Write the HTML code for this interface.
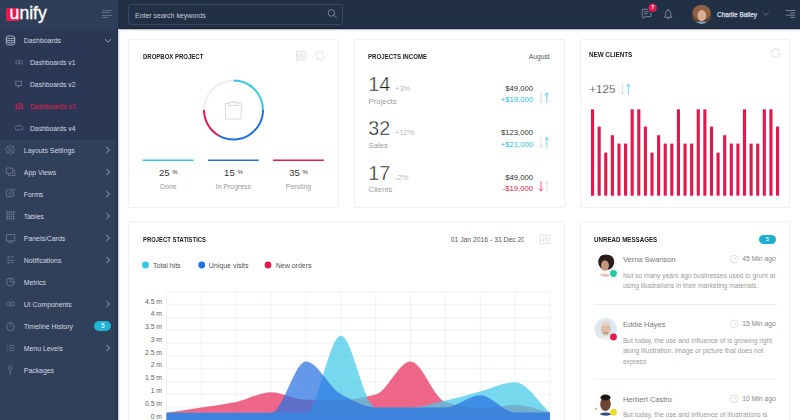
<!DOCTYPE html>
<html><head><meta charset="utf-8"><style>
html,body{margin:0;padding:0;}
body{width:800px;height:420px;overflow:hidden;position:relative;background:#fff;font-family:"Liberation Sans", sans-serif;}
.t{position:absolute;white-space:nowrap;font-family:"Liberation Sans", sans-serif;}
.r{position:absolute;}
svg.r{overflow:visible;}
</style></head><body>
<div class="r" style="left:0px;top:0px;width:118px;height:420px;background:#303f5a;"></div>
<div class="r" style="left:0px;top:0px;width:118px;height:29px;background:#2f3e58;"></div>
<div class="r" style="left:0px;top:29px;width:118px;height:110.5px;background:#2a3855;"></div>
<div class="r" style="left:114.5px;top:29px;width:2.6px;height:391px;background:rgba(25,45,95,0.14);"></div>
<div class="r" style="left:117.1px;top:29px;width:0.9px;height:391px;background:#222d48;"></div>
<div class="r" style="left:6px;top:8px;width:14px;height:12.8px;background:#e8194b;border-radius:2px 3px 3px 1px;"></div>
<div class="t" style="top:5.00px;font-size:17.6px;line-height:17.6px;color:#ffffff;font-weight:400;left:9.6px;-webkit-text-stroke:0.35px #fff;">unify</div>
<div class="r" style="left:101.5px;top:9.5px;width:10px;height:1px;background:#5f6c85;"></div>
<div class="r" style="left:101.5px;top:12px;width:8px;height:1px;background:#5f6c85;"></div>
<div class="r" style="left:101.5px;top:14.5px;width:10px;height:1px;background:#5f6c85;"></div>
<div class="r" style="left:101.5px;top:17px;width:6px;height:1px;background:#5f6c85;"></div>
<div class="t" style="top:37.96px;font-size:6.9px;line-height:6.9px;color:#d3d8e0;font-weight:400;left:23.8px;">Dashboards</div>
<div class="t" style="top:59.99px;font-size:6.75px;line-height:6.75px;color:#d3d8e0;font-weight:400;left:30px;">Dashboards v1</div>
<div class="t" style="top:81.99px;font-size:6.75px;line-height:6.75px;color:#d3d8e0;font-weight:400;left:30px;">Dashboards v2</div>
<div class="t" style="top:103.99px;font-size:6.75px;line-height:6.75px;color:#e8194b;font-weight:400;left:30px;">Dashboards v3</div>
<div class="t" style="top:125.99px;font-size:6.75px;line-height:6.75px;color:#d3d8e0;font-weight:400;left:30px;">Dashboards v4</div>
<div class="t" style="top:148.06px;font-size:6.9px;line-height:6.9px;color:#d3d8e0;font-weight:400;left:23.8px;">Layouts Settings</div>
<div class="t" style="top:170.06px;font-size:6.9px;line-height:6.9px;color:#d3d8e0;font-weight:400;left:23.8px;">App Views</div>
<div class="t" style="top:192.06px;font-size:6.9px;line-height:6.9px;color:#d3d8e0;font-weight:400;left:23.8px;">Forms</div>
<div class="t" style="top:214.06px;font-size:6.9px;line-height:6.9px;color:#d3d8e0;font-weight:400;left:23.8px;">Tables</div>
<div class="t" style="top:236.06px;font-size:6.9px;line-height:6.9px;color:#d3d8e0;font-weight:400;left:23.8px;">Panels/Cards</div>
<div class="t" style="top:258.06px;font-size:6.9px;line-height:6.9px;color:#d3d8e0;font-weight:400;left:23.8px;">Notifications</div>
<div class="t" style="top:280.06px;font-size:6.9px;line-height:6.9px;color:#d3d8e0;font-weight:400;left:23.8px;">Metrics</div>
<div class="t" style="top:302.06px;font-size:6.9px;line-height:6.9px;color:#d3d8e0;font-weight:400;left:23.8px;">UI Components</div>
<div class="t" style="top:324.06px;font-size:6.9px;line-height:6.9px;color:#d3d8e0;font-weight:400;left:23.8px;">Timeline History</div>
<div class="t" style="top:346.06px;font-size:6.9px;line-height:6.9px;color:#d3d8e0;font-weight:400;left:23.8px;">Menu Levels</div>
<div class="t" style="top:368.06px;font-size:6.9px;line-height:6.9px;color:#d3d8e0;font-weight:400;left:23.8px;">Packages</div>
<svg class="r" style="left:0;top:0" width="118" height="420"><g fill="none" stroke="#b9c0cc" stroke-width="0.9"><ellipse cx="10.5" cy="37.3" rx="4.2" ry="1.4"/><path d="M6.3,37.3 V43.6 M14.7,37.3 V43.6"/><path d="M6.3,39.4 A4.2,1.4 0 0 0 14.7,39.4 M6.3,41.5 A4.2,1.4 0 0 0 14.7,41.5 M6.3,43.6 A4.2,1.4 0 0 0 14.7,43.6"/></g><path d="M105,39.3 L108,42.2 L111,39.3" fill="none" stroke="#aab2c2" stroke-width="0.9"/><g fill="none" stroke="#68758e" stroke-width="0.9"><circle cx="17.3" cy="62.3" r="1.7"/><circle cx="20.8" cy="62.3" r="1.7"/></g><g fill="none" stroke="#68758e" stroke-width="0.9"><rect x="15.8" y="81.2" width="5.8" height="4.2"/><path d="M18.7,85.4 V86.8 M17.3,86.8 H20.1"/></g><g fill="none" stroke="#e8194b" stroke-width="0.9"><path d="M16,108.5 V105 L17,103.8 H21.5 L22.5,105 V108.5 Z M16,106 H22.5"/></g><g fill="none" stroke="#68758e" stroke-width="0.9"><path d="M15.6,129.9 V127.4 L16.8,125.8 H21.4 L22.6,127.4 V129.9 Z"/></g><g fill="none" stroke="#68758e" stroke-width="0.9"><circle cx="10.3" cy="150" r="1.6"/><path d="M10.3,145.4 L11.6,146.6 L13.4,146.5 L13.6,148.3 L14.9,149.7 L13.6,151.2 L13.4,153 L11.6,152.9 L10.3,154.2 L9,152.9 L7.2,153 L7,151.2 L5.7,149.7 L7,148.3 L7.2,146.5 L9,146.6 Z"/></g><g fill="none" stroke="#68758e" stroke-width="0.9"><rect x="6.2" y="168" width="6.5" height="5.3"/><path d="M8.5,173.3 V175.5 H14.9 V170.3 H12.7"/></g><g fill="none" stroke="#68758e" stroke-width="0.9"><path d="M12,189.8 H6.3 V196.6 H13.6 V191.5"/><path d="M9.3,194.3 L9.6,192.6 L13.5,188.7 L14.7,189.9 L10.8,193.8 Z"/></g><rect x="6.30" y="211.30" width="1.6" height="1.6" fill="#68758e"/><rect x="6.30" y="213.55" width="1.6" height="1.6" fill="#68758e"/><rect x="6.30" y="215.80" width="1.6" height="1.6" fill="#68758e"/><rect x="6.30" y="218.05" width="1.6" height="1.6" fill="#68758e"/><rect x="8.55" y="211.30" width="1.6" height="1.6" fill="#68758e"/><rect x="8.55" y="213.55" width="1.6" height="1.6" fill="#68758e"/><rect x="8.55" y="215.80" width="1.6" height="1.6" fill="#68758e"/><rect x="8.55" y="218.05" width="1.6" height="1.6" fill="#68758e"/><rect x="10.80" y="211.30" width="1.6" height="1.6" fill="#68758e"/><rect x="10.80" y="213.55" width="1.6" height="1.6" fill="#68758e"/><rect x="10.80" y="215.80" width="1.6" height="1.6" fill="#68758e"/><rect x="10.80" y="218.05" width="1.6" height="1.6" fill="#68758e"/><rect x="13.05" y="211.30" width="1.6" height="1.6" fill="#68758e"/><rect x="13.05" y="213.55" width="1.6" height="1.6" fill="#68758e"/><rect x="13.05" y="215.80" width="1.6" height="1.6" fill="#68758e"/><rect x="13.05" y="218.05" width="1.6" height="1.6" fill="#68758e"/><g fill="none" stroke="#68758e" stroke-width="0.9"><rect x="6.3" y="234.6" width="8.5" height="6.2"/><path d="M7.5,242.2 H13.6"/></g><g fill="none" stroke="#68758e" stroke-width="0.9"><path d="M7.5,256.8 H9.5 M7.5,258 H9.5 M10.5,256.8 H14 M7.5,260.3 H14 M7.5,262.4 H9.5 M10.5,262.4 H14 M7.5,263.4 H9.5"/></g><g fill="none" stroke="#68758e" stroke-width="0.9"><circle cx="10.5" cy="282" r="4"/><path d="M10.5,278 V282 H14.5"/></g><g fill="none" stroke="#68758e" stroke-width="0.9"><circle cx="8.6" cy="303.9" r="2"/><circle cx="12.6" cy="303.9" r="2"/></g><g fill="none" stroke="#68758e" stroke-width="0.9"><circle cx="10.5" cy="327" r="3.8"/><path d="M10.5,327 V324.8 M9.3,322.2 H11.7"/></g><g fill="none" stroke="#68758e" stroke-width="0.9"><path d="M6.8,345.5 H7.8 M9,345.5 H14.6 M6.8,347.9 H7.8 M9,347.9 H14.6 M6.8,350.3 H7.8 M9,350.3 H14.6"/></g><g fill="none" stroke="#68758e" stroke-width="0.9"><rect x="8.5" y="366" width="3.8" height="4" rx="1.9"/><path d="M10.4,370 V374.5 M9.4,373 H11.4"/></g><path d="M106.3,147.0 L109.6,150.0 L106.3,153.0" fill="none" stroke="#aab2c2" stroke-width="0.9"/><path d="M106.3,169.0 L109.6,172.0 L106.3,175.0" fill="none" stroke="#aab2c2" stroke-width="0.9"/><path d="M106.3,191.0 L109.6,194.0 L106.3,197.0" fill="none" stroke="#aab2c2" stroke-width="0.9"/><path d="M106.3,213.0 L109.6,216.0 L106.3,219.0" fill="none" stroke="#aab2c2" stroke-width="0.9"/><path d="M106.3,235.0 L109.6,238.0 L106.3,241.0" fill="none" stroke="#aab2c2" stroke-width="0.9"/><path d="M106.3,257.0 L109.6,260.0 L106.3,263.0" fill="none" stroke="#aab2c2" stroke-width="0.9"/><path d="M106.3,301.0 L109.6,304.0 L106.3,307.0" fill="none" stroke="#aab2c2" stroke-width="0.9"/><path d="M106.3,345.0 L109.6,348.0 L106.3,351.0" fill="none" stroke="#aab2c2" stroke-width="0.9"/></svg>
<div class="r" style="left:94.3px;top:320.5px;width:17px;height:10.3px;background:#1fb3d4;border-radius:5.2px;"></div>
<div class="t" style="top:322.50px;font-size:6.5px;line-height:6.5px;color:#ffffff;font-weight:400;left:-47.20px;width:300px;text-align:center;">5</div>
<div class="r" style="left:118px;top:0px;width:682px;height:28px;background:#223045;"></div>
<div class="r" style="left:118px;top:28px;width:682px;height:1px;background:#151d33;"></div>
<div class="r" style="left:127.5px;top:3.5px;width:215.5px;height:21px;background:transparent;box-sizing:border-box;border:1px solid #3a4864;border-radius:3px;"></div>
<div class="t" style="top:11.93px;font-size:7.05px;line-height:7.05px;color:#c5cbd5;font-weight:400;letter-spacing:-0.04px;left:135px;">Enter search keywords</div>
<svg class="r" style="left:0;top:0" width="800" height="28"><g fill="none" stroke="#7e8aa2" stroke-width="0.9"><circle cx="331.4" cy="12.9" r="3.3"/><path d="M333.8,15.3 L336.8,18.2"/></g><g fill="none" stroke="#7e8aa2" stroke-width="0.9"><path d="M642.2,9.3 H651 V16.6 H645.2 L643,18.6 V16.6 H642.2 Z"/><path d="M644.2,11.8 H649 M644.2,13.8 H647.5"/></g><circle cx="652.7" cy="7.7" r="4.9" fill="#223045"/><circle cx="652.7" cy="7.7" r="4.2" fill="#e8194b"/><g fill="none" stroke="#7e8aa2" stroke-width="0.9"><path d="M664.5,17.3 H672 L670.8,15.8 V13 A2.6,3 0 0 0 665.7,13 V15.8 Z"/><path d="M667.4,9.6 H669.1 M667.1,18.4 H669.4"/></g><path d="M763.2,12.6 L766,15.2 L768.8,12.6" fill="none" stroke="#6b7790" stroke-width="0.9"/><rect x="785.7" y="10.0" width="9.5" height="1" fill="#7884a0"/><rect x="790.2" y="12.4" width="5" height="1" fill="#7884a0"/><rect x="785.7" y="14.7" width="9.5" height="1" fill="#7884a0"/><rect x="790.2" y="16.9" width="5" height="1" fill="#7884a0"/><defs><clipPath id="av0"><circle cx="701.6" cy="14.4" r="9.7"/></clipPath></defs><defs><filter id="blh" x="-10%" y="-10%" width="120%" height="120%"><feGaussianBlur stdDeviation="0.7"/></filter></defs><g clip-path="url(#av0)" filter="url(#blh)"><rect x="690" y="3" width="23" height="23" fill="#5a4536"/><ellipse cx="701.6" cy="12" rx="9" ry="8.5" fill="#8f6244"/><ellipse cx="701.8" cy="15.5" rx="4.3" ry="5.5" fill="#d9ad8f"/><ellipse cx="701.6" cy="25" rx="7" ry="3.5" fill="#7aa6c8"/></g></svg>
<div class="t" style="top:5.24px;font-size:5.5px;line-height:5.5px;color:#ffffff;font-weight:700;left:502.70px;width:300px;text-align:center;">7</div>
<div class="t" style="top:12.10px;font-size:6.5px;line-height:6.5px;color:#d9dde4;font-weight:400;left:717px;-webkit-text-stroke:0.25px #d9dde4;">Charlie Bailey</div>
<div class="r" style="left:118px;top:29px;width:682px;height:391px;background:#ffffff;"></div>
<div class="r" style="left:118px;top:29px;width:682px;height:1.6px;background:linear-gradient(#b9bdc6,#ffffff);"></div>
<div class="r" style="left:118px;top:29px;width:1.5px;height:391px;background:linear-gradient(90deg,#c3c8d3,#ffffff);"></div>
<div class="r" style="left:128px;top:39px;width:210.5px;height:168.5px;background:#ffffff;box-sizing:border-box;border:1px solid #f0f0f0;border-radius:1.5px;"></div>
<div class="r" style="left:353.5px;top:39px;width:211px;height:168.5px;background:#ffffff;box-sizing:border-box;border:1px solid #f0f0f0;border-radius:1.5px;"></div>
<div class="r" style="left:579.5px;top:39px;width:210.5px;height:168.5px;background:#ffffff;box-sizing:border-box;border:1px solid #f0f0f0;border-radius:1.5px;"></div>
<div class="r" style="left:128px;top:221px;width:436.5px;height:260px;background:#ffffff;box-sizing:border-box;border:1px solid #f0f0f0;border-radius:1.5px;"></div>
<div class="r" style="left:579.5px;top:221px;width:210.5px;height:260px;background:#ffffff;box-sizing:border-box;border:1px solid #f0f0f0;border-radius:1.5px;"></div>
<div class="t" style="top:53.94px;font-size:6.8px;line-height:6.8px;color:#222222;font-weight:700;left:143px;transform:scaleX(0.883);transform-origin:0 0;">DROPBOX PROJECT</div>
<div class="t" style="top:53.94px;font-size:6.8px;line-height:6.8px;color:#222222;font-weight:700;left:368.3px;transform:scaleX(0.900);transform-origin:0 0;">PROJECTS INCOME</div>
<div class="t" style="top:51.94px;font-size:6.8px;line-height:6.8px;color:#222222;font-weight:700;left:589.1px;transform:scaleX(0.922);transform-origin:0 0;">NEW CLIENTS</div>
<div class="t" style="top:236.74px;font-size:6.8px;line-height:6.8px;color:#222222;font-weight:700;left:143px;transform:scaleX(0.867);transform-origin:0 0;">PROJECT STATISTICS</div>
<div class="t" style="top:236.94px;font-size:6.8px;line-height:6.8px;color:#222222;font-weight:700;left:593.7px;transform:scaleX(0.910);transform-origin:0 0;">UNREAD MESSAGES</div>
<svg class="r" style="left:0;top:0" width="800" height="420"><g fill="none" stroke="#dadada" stroke-width="0.8"><rect x="296.4" y="51.6" width="8.8" height="8.4"/><path d="M298.7,53.3 V58.5 M300.8,53.3 V58.5 M302.9,53.3 V58.5 M297.9,56.5 H299.5 M300,54.6 H301.6 M302.1,57.2 H303.7"/></g><g fill="none" stroke="#d6d6d6" stroke-width="0.8"><path d="M315.60,55.70 A4.2,4.2 0 0 1 322.74,52.76"/><path d="M324.00,55.70 A4.2,4.2 0 0 1 316.86,58.64"/><path d="M321.14,51.56 L322.74,52.76 L322.44,54.56"/><path d="M318.46,59.84 L316.86,58.64 L317.16,56.84"/></g><g fill="none" stroke="#d6d6d6" stroke-width="0.8"><path d="M771.40,53.00 A4.2,4.2 0 0 1 778.54,50.06"/><path d="M779.80,53.00 A4.2,4.2 0 0 1 772.66,55.94"/><path d="M776.94,48.86 L778.54,50.06 L778.24,51.86"/><path d="M774.26,57.14 L772.66,55.94 L772.96,54.14"/></g><path d="M204.00,110.00 A29.5,29.5 0 0 1 233.50,80.50" fill="none" stroke="#eeeeee" stroke-width="2"/><path d="M233.50,80.50 A29.5,29.5 0 0 1 263.00,110.00" fill="none" stroke="#35c6e6" stroke-width="2"/><path d="M263.00,110.00 A29.5,29.5 0 0 1 218.75,135.55" fill="none" stroke="#1f6fe0" stroke-width="2"/><path d="M218.75,135.55 A29.5,29.5 0 0 1 204.00,110.00" fill="none" stroke="#e6194b" stroke-width="2"/><g fill="none" stroke="#d5d5d5" stroke-width="0.9"><path d="M228.7,103.3 H225.6 V119.1 H241.2 V103.3 H238.2"/><rect x="229" y="102.3" width="9" height="3.3"/><path d="M231.8,102.3 L233.5,100.9 L235.2,102.3"/></g><rect x="142.75" y="159.5" width="51" height="1.5" fill="#35c6e6"/><rect x="208" y="159.5" width="50.75" height="1.5" fill="#1f6fe0"/><rect x="273" y="159.5" width="51" height="1.5" fill="#e6194b"/><g fill="none" stroke-width="0.65" stroke-linecap="round"><path d="M541.00,93 V102.5 M539.30,100.30 L541.00,102.5 L542.70,100.30" stroke="#cfcfcf"/><path d="M546.80,102.5 V93 M545.10,95.20 L546.80,93 L548.50,95.20" stroke="#2fb8dc"/></g><g fill="none" stroke-width="0.65" stroke-linecap="round"><path d="M541.00,137.5 V147 M539.30,144.80 L541.00,147 L542.70,144.80" stroke="#cfcfcf"/><path d="M546.80,147 V137.5 M545.10,139.70 L546.80,137.5 L548.50,139.70" stroke="#2fb8dc"/></g><g fill="none" stroke-width="0.65" stroke-linecap="round"><path d="M541.00,181.5 V191 M539.30,188.80 L541.00,191 L542.70,188.80" stroke="#e6194b"/><path d="M546.80,191 V181.5 M545.10,183.70 L546.80,181.5 L548.50,183.70" stroke="#cfcfcf"/></g><g fill="none" stroke-width="0.65" stroke-linecap="round"><path d="M622.50,84.3 V93.8 M620.80,91.60 L622.50,93.8 L624.20,91.60" stroke="#cfcfcf"/><path d="M628.30,93.8 V84.3 M626.60,86.50 L628.30,84.3 L630.00,86.50" stroke="#2fb8dc"/></g><rect x="591.00" y="109.3" width="3.1" height="86.40" fill="#e5164b"/><rect x="597.61" y="126.6" width="3.1" height="69.10" fill="#e5164b"/><rect x="604.21" y="152.6" width="3.1" height="43.10" fill="#e5164b"/><rect x="610.82" y="135.2" width="3.1" height="60.50" fill="#e5164b"/><rect x="617.43" y="143.6" width="3.1" height="52.10" fill="#e5164b"/><rect x="624.03" y="143.6" width="3.1" height="52.10" fill="#e5164b"/><rect x="630.64" y="109.3" width="3.1" height="86.40" fill="#e5164b"/><rect x="637.25" y="109.3" width="3.1" height="86.40" fill="#e5164b"/><rect x="643.86" y="126.6" width="3.1" height="69.10" fill="#e5164b"/><rect x="650.46" y="152.6" width="3.1" height="43.10" fill="#e5164b"/><rect x="657.07" y="135.2" width="3.1" height="60.50" fill="#e5164b"/><rect x="663.68" y="143.6" width="3.1" height="52.10" fill="#e5164b"/><rect x="670.28" y="143.6" width="3.1" height="52.10" fill="#e5164b"/><rect x="676.89" y="109.3" width="3.1" height="86.40" fill="#e5164b"/><rect x="683.50" y="143.6" width="3.1" height="52.10" fill="#e5164b"/><rect x="690.11" y="143.6" width="3.1" height="52.10" fill="#e5164b"/><rect x="696.71" y="109.3" width="3.1" height="86.40" fill="#e5164b"/><rect x="703.32" y="109.3" width="3.1" height="86.40" fill="#e5164b"/><rect x="709.93" y="126.6" width="3.1" height="69.10" fill="#e5164b"/><rect x="716.53" y="152.6" width="3.1" height="43.10" fill="#e5164b"/><rect x="723.14" y="135.2" width="3.1" height="60.50" fill="#e5164b"/><rect x="729.75" y="143.6" width="3.1" height="52.10" fill="#e5164b"/><rect x="736.35" y="143.6" width="3.1" height="52.10" fill="#e5164b"/><rect x="742.96" y="109.3" width="3.1" height="86.40" fill="#e5164b"/><rect x="749.57" y="143.6" width="3.1" height="52.10" fill="#e5164b"/><rect x="756.17" y="143.6" width="3.1" height="52.10" fill="#e5164b"/><rect x="762.78" y="109.3" width="3.1" height="86.40" fill="#e5164b"/><rect x="769.39" y="109.3" width="3.1" height="86.40" fill="#e5164b"/><rect x="776.00" y="126.6" width="3.1" height="69.10" fill="#e5164b"/></svg>
<div class="t" style="left:118.25px;width:100px;text-align:center;top:167.87px;font-size:9.6px;line-height:9.6px;color:#383838">25 <span style="font-size:6px;vertical-align:2px;color:#383838">%</span></div>
<div class="t" style="top:184.16px;font-size:6.9px;line-height:6.9px;color:#9a9a9a;font-weight:400;left:18.25px;width:300px;text-align:center;">Done</div>
<div class="t" style="left:183.4px;width:100px;text-align:center;top:167.87px;font-size:9.6px;line-height:9.6px;color:#383838">15 <span style="font-size:6px;vertical-align:2px;color:#383838">%</span></div>
<div class="t" style="top:184.16px;font-size:6.9px;line-height:6.9px;color:#9a9a9a;font-weight:400;left:83.40px;width:300px;text-align:center;">In Progress</div>
<div class="t" style="left:248.5px;width:100px;text-align:center;top:167.87px;font-size:9.6px;line-height:9.6px;color:#383838">35 <span style="font-size:6px;vertical-align:2px;color:#383838">%</span></div>
<div class="t" style="top:184.16px;font-size:6.9px;line-height:6.9px;color:#9a9a9a;font-weight:400;left:148.50px;width:300px;text-align:center;">Pending</div>
<div class="t" style="top:53.99px;font-size:6.75px;line-height:6.75px;color:#555555;font-weight:400;right:250.30px;text-align:right;">August</div>
<div class="t" style="top:74.94px;font-size:19.8px;line-height:19.8px;color:#1a1a1a;font-weight:400;left:368.3px;-webkit-text-stroke:0.4px #fff;">14</div>
<div class="t" style="top:85.05px;font-size:7.5px;line-height:7.5px;color:#b8b8b8;font-weight:400;left:395px;">+3%</div>
<div class="t" style="top:97.60px;font-size:7.8px;line-height:7.8px;color:#9c9c9c;font-weight:400;left:368.5px;">Projects</div>
<div class="t" style="top:85.18px;font-size:7.7px;line-height:7.7px;color:#333333;font-weight:400;right:267.00px;text-align:right;">$49,000</div>
<div class="t" style="top:96.48px;font-size:7.7px;line-height:7.7px;color:#2fb8dc;font-weight:400;right:267.00px;text-align:right;">+$19,000</div>
<div class="t" style="top:119.24px;font-size:19.8px;line-height:19.8px;color:#1a1a1a;font-weight:400;left:368.3px;-webkit-text-stroke:0.4px #fff;">32</div>
<div class="t" style="top:129.35px;font-size:7.5px;line-height:7.5px;color:#b8b8b8;font-weight:400;left:395px;">+12%</div>
<div class="t" style="top:141.90px;font-size:7.8px;line-height:7.8px;color:#9c9c9c;font-weight:400;left:368.5px;">Sales</div>
<div class="t" style="top:129.48px;font-size:7.7px;line-height:7.7px;color:#333333;font-weight:400;right:267.00px;text-align:right;">$123,000</div>
<div class="t" style="top:140.78px;font-size:7.7px;line-height:7.7px;color:#2fb8dc;font-weight:400;right:267.00px;text-align:right;">+$21,000</div>
<div class="t" style="top:163.54px;font-size:19.8px;line-height:19.8px;color:#1a1a1a;font-weight:400;left:368.3px;-webkit-text-stroke:0.4px #fff;">17</div>
<div class="t" style="top:173.65px;font-size:7.5px;line-height:7.5px;color:#b8b8b8;font-weight:400;left:395px;">-2%</div>
<div class="t" style="top:186.20px;font-size:7.8px;line-height:7.8px;color:#9c9c9c;font-weight:400;left:368.5px;">Clients</div>
<div class="t" style="top:173.78px;font-size:7.7px;line-height:7.7px;color:#333333;font-weight:400;right:267.00px;text-align:right;">$49,000</div>
<div class="t" style="top:185.08px;font-size:7.7px;line-height:7.7px;color:#e6194b;font-weight:400;right:267.00px;text-align:right;">-$19,000</div>
<div class="t" style="top:83.18px;font-size:11.6px;line-height:11.6px;color:#2a2a2a;font-weight:400;left:589.3px;-webkit-text-stroke:0.25px #fff;">+125</div>
<div class="t" style="top:237.14px;font-size:6.8px;line-height:6.8px;color:#555555;font-weight:400;left:450.7px;width:73px;overflow:hidden;white-space:nowrap;">01 Jan 2016 - 31 Dec 20<span style="color:#ccc">&#8964;</span></div>
<svg class="r" style="left:0;top:0" width="800" height="420"><g fill="none" stroke="#dadada" stroke-width="0.8"><rect x="540.6" y="235.1" width="9.4" height="8.6"/><path d="M543.2,237 V242 M545.3,237 V242 M547.4,237 V242 M542.4,240 H544 M544.5,238.3 H546.1 M546.6,240.6 H548.2"/></g><circle cx="145.5" cy="265" r="3.4" fill="#35c6e6"/><circle cx="201.75" cy="265" r="3.4" fill="#1f6fe0"/><circle cx="268" cy="265" r="3.4" fill="#e6194b"/></svg>
<div class="t" style="top:261.67px;font-size:7.0px;line-height:7.0px;color:#555555;font-weight:400;left:153px;">Total hits</div>
<div class="t" style="top:261.67px;font-size:7.0px;line-height:7.0px;color:#555555;font-weight:400;left:208.75px;">Unique visits</div>
<div class="t" style="top:261.67px;font-size:7.0px;line-height:7.0px;color:#555555;font-weight:400;left:275.75px;">New orders</div>
<div class="t" style="top:298.52px;font-size:6.8px;line-height:6.8px;color:#5e5e5e;font-weight:400;right:638.00px;text-align:right;">4.5 m</div>
<div class="t" style="top:311.30px;font-size:6.8px;line-height:6.8px;color:#5e5e5e;font-weight:400;right:638.00px;text-align:right;">4 m</div>
<div class="t" style="top:324.08px;font-size:6.8px;line-height:6.8px;color:#5e5e5e;font-weight:400;right:638.00px;text-align:right;">3.5 m</div>
<div class="t" style="top:336.86px;font-size:6.8px;line-height:6.8px;color:#5e5e5e;font-weight:400;right:638.00px;text-align:right;">3 m</div>
<div class="t" style="top:349.64px;font-size:6.8px;line-height:6.8px;color:#5e5e5e;font-weight:400;right:638.00px;text-align:right;">2.5 m</div>
<div class="t" style="top:362.42px;font-size:6.8px;line-height:6.8px;color:#5e5e5e;font-weight:400;right:638.00px;text-align:right;">2 m</div>
<div class="t" style="top:375.20px;font-size:6.8px;line-height:6.8px;color:#5e5e5e;font-weight:400;right:638.00px;text-align:right;">1.5 m</div>
<div class="t" style="top:387.98px;font-size:6.8px;line-height:6.8px;color:#5e5e5e;font-weight:400;right:638.00px;text-align:right;">1 m</div>
<div class="t" style="top:400.76px;font-size:6.8px;line-height:6.8px;color:#5e5e5e;font-weight:400;right:638.00px;text-align:right;">0.5 m</div>
<div class="t" style="top:413.54px;font-size:6.8px;line-height:6.8px;color:#5e5e5e;font-weight:400;right:638.00px;text-align:right;">0 m</div>
<svg class="r" style="left:0;top:0" width="800" height="420"><rect x="166.5" y="291.50" width="383.5" height="1" fill="#eef3f4"/><rect x="166.5" y="304.28" width="383.5" height="1" fill="#eef3f4"/><rect x="166.5" y="317.06" width="383.5" height="1" fill="#eef3f4"/><rect x="166.5" y="329.84" width="383.5" height="1" fill="#eef3f4"/><rect x="166.5" y="342.62" width="383.5" height="1" fill="#eef3f4"/><rect x="166.5" y="355.40" width="383.5" height="1" fill="#eef3f4"/><rect x="166.5" y="368.18" width="383.5" height="1" fill="#eef3f4"/><rect x="166.5" y="380.96" width="383.5" height="1" fill="#eef3f4"/><rect x="166.5" y="393.74" width="383.5" height="1" fill="#eef3f4"/><rect x="166.5" y="406.52" width="383.5" height="1" fill="#eef3f4"/><rect x="166.5" y="419.30" width="383.5" height="1" fill="#eef3f4"/><rect x="166.00" y="292" width="1" height="128" fill="#eef3f4"/><rect x="200.86" y="292" width="1" height="128" fill="#eef3f4"/><rect x="235.73" y="292" width="1" height="128" fill="#eef3f4"/><rect x="270.59" y="292" width="1" height="128" fill="#eef3f4"/><rect x="305.46" y="292" width="1" height="128" fill="#eef3f4"/><rect x="340.32" y="292" width="1" height="128" fill="#eef3f4"/><rect x="375.18" y="292" width="1" height="128" fill="#eef3f4"/><rect x="410.05" y="292" width="1" height="128" fill="#eef3f4"/><rect x="444.91" y="292" width="1" height="128" fill="#eef3f4"/><rect x="479.78" y="292" width="1" height="128" fill="#eef3f4"/><rect x="514.64" y="292" width="1" height="128" fill="#eef3f4"/><rect x="549.50" y="292" width="1" height="128" fill="#eef3f4"/><path d="M166.50,412.80 C178.12,411.03 189.74,409.30 201.36,407.50 C212.99,405.70 224.61,404.35 236.23,402.00 C247.85,399.65 259.47,392.20 271.09,392.20 C282.71,392.20 294.33,399.80 305.96,399.80 C317.58,399.80 329.20,399.80 340.82,399.80 C352.44,399.80 364.06,397.55 375.68,394.50 C387.31,391.45 398.93,361.40 410.55,361.40 C422.17,361.40 433.79,398.52 445.41,402.00 C457.03,405.48 468.65,408.00 480.28,408.00 C491.90,408.00 503.52,405.00 515.14,405.00 C526.76,405.00 538.38,410.00 550.00,412.50 L550.00,421 L166.50,421 Z" fill="#e82f5d" fill-opacity="0.735"/><path d="M166.50,412.80 C178.12,412.80 189.74,412.80 201.36,412.80 C212.99,412.80 224.61,412.80 236.23,412.80 C247.85,412.80 259.47,412.80 271.09,412.80 C282.71,412.80 294.33,412.80 305.96,412.80 C317.58,412.80 329.20,335.70 340.82,335.70 C352.44,335.70 364.06,407.40 375.68,407.40 C387.31,407.40 398.93,407.40 410.55,407.40 C422.17,407.40 433.79,403.10 445.41,400.50 C457.03,397.90 468.65,394.55 480.28,391.50 C491.90,388.45 503.52,382.20 515.14,382.20 C526.76,382.20 538.38,402.40 550.00,412.50 L550.00,421 L166.50,421 Z" fill="#45cae8" fill-opacity="0.735"/><path d="M166.50,412.80 C178.12,412.80 189.74,412.80 201.36,412.80 C212.99,412.80 224.61,412.80 236.23,412.80 C247.85,412.80 259.47,412.80 271.09,412.80 C282.71,412.80 294.33,361.40 305.96,361.40 C317.58,361.40 329.20,387.67 340.82,394.00 C352.44,400.33 364.06,407.40 375.68,407.40 C387.31,407.40 398.93,407.40 410.55,407.40 C422.17,407.40 433.79,407.40 445.41,407.40 C457.03,407.40 468.65,395.20 480.28,395.20 C491.90,395.20 503.52,412.50 515.14,412.50 C526.76,412.50 538.38,412.50 550.00,412.50 L550.00,421 L166.50,421 Z" fill="#2b74e2" fill-opacity="0.735"/></svg>
<div class="r" style="left:759px;top:234.9px;width:17px;height:8.9px;background:#1fb0d0;border-radius:4.5px;"></div>
<div class="t" style="top:236.22px;font-size:6px;line-height:6px;color:#ffffff;font-weight:400;left:617.50px;width:300px;text-align:center;">5</div>
<svg class="r" style="left:0;top:0" width="800" height="420"><defs><filter id="blr" x="-10%" y="-10%" width="120%" height="120%"><feGaussianBlur stdDeviation="0.6"/></filter></defs><defs><clipPath id="a1"><circle cx="605.8" cy="265.7" r="11.2"/></clipPath></defs><g clip-path="url(#a1)" filter="url(#blr)"><rect x="594" y="253" width="24" height="26" fill="#fafafa"/><ellipse cx="606.2" cy="262" rx="8" ry="8" fill="#2b1f1a"/><ellipse cx="605" cy="265.5" rx="4" ry="5.2" fill="#c3937a"/><ellipse cx="604.5" cy="277" rx="6" ry="3.5" fill="#e7c9b5"/><ellipse cx="606" cy="280" rx="9" ry="3" fill="#f4f4f4"/></g><circle cx="613.5" cy="273.5" r="3.4" fill="#1ccba2"/><g fill="none" stroke="#d8d8d8" stroke-width="0.8"><circle cx="734.2" cy="259" r="3.9"/><path d="M734.2,256.8 V259 H736.2"/></g><defs><clipPath id="a2"><circle cx="605.8" cy="329.2" r="11.2"/></clipPath></defs><g clip-path="url(#a2)" filter="url(#blr)"><rect x="594" y="317" width="24" height="26" fill="#dce9f1"/><ellipse cx="605.8" cy="329" rx="5" ry="6.5" fill="#dcbea6"/><ellipse cx="605.8" cy="323.5" rx="4.3" ry="2.5" fill="#e6d2c4"/><path d="M603.5,333.3 Q605.8,332.2 608.1,333.3" stroke="#8a6e5c" stroke-width="0.8" fill="none"/><ellipse cx="605.8" cy="341" rx="8" ry="4" fill="#f3f1ee"/></g><circle cx="613.5" cy="337.0" r="3.4" fill="#e6194b"/><g fill="none" stroke="#d8d8d8" stroke-width="0.8"><circle cx="734.2" cy="323.9" r="3.9"/><path d="M734.2,321.7 V323.9 H736.2"/></g><defs><clipPath id="a3"><circle cx="605.8" cy="404.5" r="11.2"/></clipPath></defs><g clip-path="url(#a3)" filter="url(#blr)"><rect x="594" y="392" width="24" height="26" fill="#fbfbfb"/><ellipse cx="605.5" cy="404" rx="5.3" ry="7" fill="#6e4532"/><ellipse cx="605.5" cy="397.5" rx="5" ry="3" fill="#1d1512"/><ellipse cx="605.5" cy="416" rx="7" ry="3.5" fill="#2f4d80"/></g><circle cx="596" cy="409" r="0.9" fill="#8cc45a"/><circle cx="613.5" cy="412.3" r="3.4" fill="#e9df1c"/><g fill="none" stroke="#d8d8d8" stroke-width="0.8"><circle cx="734.2" cy="398.6" r="3.9"/><path d="M734.2,396.40000000000003 V398.6 H736.2"/></g><rect x="594.3" y="304" width="182" height="1" fill="#eeeeee"/><rect x="594.3" y="378.7" width="182" height="1" fill="#eeeeee"/></svg>
<div class="t" style="top:256.27px;font-size:7.6px;line-height:7.6px;color:#7a7a7a;font-weight:400;letter-spacing:-0.05px;left:622.9px;">Verna Swanson</div>
<div class="t" style="top:256.49px;font-size:6.75px;line-height:6.75px;color:#858585;font-weight:400;right:24.30px;text-align:right;">45 Min ago</div>
<div class="t" style="top:272.73px;font-size:6.7px;line-height:6.7px;color:#9a9a9a;font-weight:400;left:622.9px;">Not so many years ago businesses used to grunt at</div>
<div class="t" style="top:283.23px;font-size:6.7px;line-height:6.7px;color:#9a9a9a;font-weight:400;left:622.9px;">using illustrations in their marketing materials.</div>
<div class="t" style="top:321.17px;font-size:7.6px;line-height:7.6px;color:#7a7a7a;font-weight:400;letter-spacing:-0.05px;left:622.9px;">Eddie Hayes</div>
<div class="t" style="top:321.39px;font-size:6.75px;line-height:6.75px;color:#858585;font-weight:400;right:24.30px;text-align:right;">15 Min ago</div>
<div class="t" style="top:337.63px;font-size:6.7px;line-height:6.7px;color:#9a9a9a;font-weight:400;left:622.9px;">But today, the use and influence of is growing right</div>
<div class="t" style="top:348.13px;font-size:6.7px;line-height:6.7px;color:#9a9a9a;font-weight:400;left:622.9px;">along illustration, image or picture that does not</div>
<div class="t" style="top:358.63px;font-size:6.7px;line-height:6.7px;color:#9a9a9a;font-weight:400;left:622.9px;">express</div>
<div class="t" style="top:395.87px;font-size:7.6px;line-height:7.6px;color:#7a7a7a;font-weight:400;letter-spacing:-0.05px;left:622.9px;">Herbert Castro</div>
<div class="t" style="top:396.09px;font-size:6.75px;line-height:6.75px;color:#858585;font-weight:400;right:24.30px;text-align:right;">10 Min ago</div>
<div class="t" style="top:412.33px;font-size:6.7px;line-height:6.7px;color:#9a9a9a;font-weight:400;left:622.9px;">But today, the use and influence of illustrations is</div>
</body></html>
